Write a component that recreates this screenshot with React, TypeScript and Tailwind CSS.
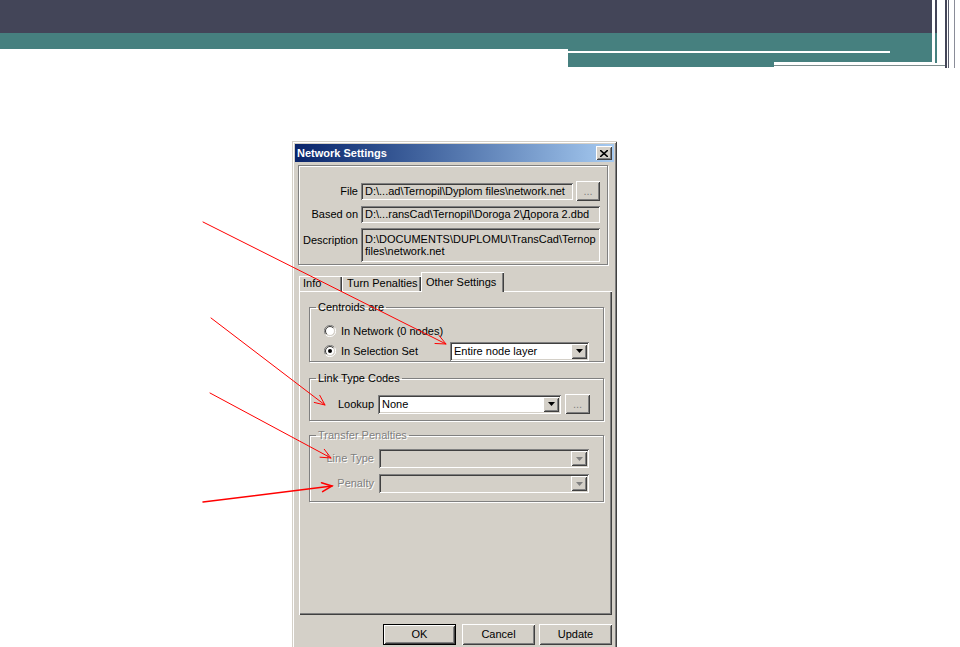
import React from 'react';

const sunken = 'shadow-[inset_1px_1px_0_#808080,inset_-1px_-1px_0_#ffffff,inset_2px_2px_0_#404040,inset_-2px_-2px_0_#d4d0c8]';
const raised = 'shadow-[inset_1px_1px_0_#ffffff,inset_-1px_-1px_0_#404040,inset_2px_2px_0_#d4d0c8,inset_-2px_-2px_0_#808080]';
const grey = 'text-[#808080] [text-shadow:1px_1px_0_#ffffff]';

const Header: React.FC = () => (
    <svg width="960" height="70" viewBox="0 0 960 70" className="block">
        <rect x="0" y="0" width="932" height="33" fill="#434558" />
        <rect x="0" y="33" width="932" height="16" fill="#46807f" />
        <rect x="568" y="49" width="364" height="13" fill="#46807f" />
        <rect x="568" y="62" width="206" height="5" fill="#46807f" />
        <rect x="568" y="51" width="322" height="2" fill="#ffffff" />
        <line x1="774" y1="65.5" x2="946" y2="65.5" stroke="#7d8c8c" strokeWidth="1" />
        <rect x="935" y="0" width="2" height="33" fill="#434558" />
        <rect x="935" y="33" width="2" height="30" fill="#46807f" />
        <rect x="945" y="0" width="2" height="68" fill="#434558" />
        <rect x="948" y="0" width="1" height="68" fill="#5a5c6c" />
        <rect x="954" y="0" width="1" height="68" fill="#8a8c98" />
    </svg>
);

const Arrow: React.FC<{ x1: number; y1: number; x2: number; y2: number; w?: number }> = ({ x1, y1, x2, y2, w = 1 }) => {
    const a = Math.atan2(y2 - y1, x2 - x1);
    const L = 11;
    const s = 0.42;
    const p1 = `${x2 - L * Math.cos(a - s)},${y2 - L * Math.sin(a - s)}`;
    const p2 = `${x2 - L * Math.cos(a + s)},${y2 - L * Math.sin(a + s)}`;
    return (
        <g stroke="#ff0000" strokeWidth={w} fill="none" strokeLinecap="round">
            <line x1={x1} y1={y1} x2={x2} y2={y2} />
            <polyline points={`${p1} ${x2},${y2} ${p2}`} />
        </g>
    );
};

const DropBtn: React.FC<{ disabled?: boolean }> = ({ disabled }) => (
    <span className={`w-[16px] h-[15px] bg-[#d4d0c8] flex items-center justify-center shrink-0 ${raised}`}>
        <svg width="7" height="4" viewBox="0 0 7 4">
            <polygon points="0,0 7,0 3.5,4" fill={disabled ? '#808080' : '#000000'} />
        </svg>
    </span>
);

const Combo: React.FC<{ value?: string; className: string; disabled?: boolean }> = ({ value, className, disabled }) => (
    <div className={`flex items-center p-[2px] ${disabled ? 'bg-[#d4d0c8]' : 'bg-white'} ${sunken} ${className}`}>
        <span className="flex-1 pl-[2px] whitespace-nowrap overflow-hidden">{value}</span>
        <DropBtn disabled={disabled} />
    </div>
);

const Radio: React.FC<{ checked?: boolean }> = ({ checked }) => (
    <svg width="12" height="12" viewBox="0 0 12 12" className="shrink-0">
        <path d="M10.5 2.5 A5.5 5.5 0 0 0 1.5 9.5" stroke="#808080" fill="none" />
        <path d="M1.5 9.5 A5.5 5.5 0 0 0 10.5 2.5" stroke="#ffffff" fill="none" />
        <circle cx="6" cy="6" r="4.5" fill="#ffffff" stroke="#d4d0c8" />
        <path d="M9.2 2.8 A4.5 4.5 0 0 0 2.8 9.2" stroke="#404040" fill="none" />
        {checked && <circle cx="6" cy="6" r="2" fill="#000000" />}
    </svg>
);

const Group: React.FC<{ title: string; disabled?: boolean; className?: string; children: React.ReactNode }> = ({ title, disabled, className, children }) => (
    <fieldset className={`border border-[#808080] shadow-[inset_1px_1px_0_#ffffff,1px_1px_0_#ffffff] ${className ?? ''}`}>
        <legend className={`ml-[6px] px-[2px] leading-[13px] ${disabled ? grey : ''}`}>{title}</legend>
        {children}
    </fieldset>
);

const WinButton: React.FC<{ label: string; isDefault?: boolean; className?: string }> = ({ label, isDefault, className }) => (
    <button className={`w-[73px] h-[21px] bg-[#d4d0c8] flex items-center justify-center ${isDefault ? 'border border-black' : ''} ${raised} ${className ?? ''}`}>
        {label}
    </button>
);

export default function App() {
    return (
        <div className="relative w-[960px] h-[647px] overflow-hidden bg-white font-['Liberation_Sans',Arial,sans-serif] text-[11px] leading-[13px] text-black">
            <Header />

            {/* Dialog */}
            <div className={`ml-[292px] mt-[71px] w-[325px] h-[520px] bg-[#d4d0c8] p-[3px] shadow-[inset_1px_1px_0_#d4d0c8,inset_-1px_-1px_0_#404040,inset_2px_2px_0_#ffffff,inset_-2px_-2px_0_#808080]`}>
                <div className="h-[18px] flex items-center justify-between pl-[2px] pr-[2px] bg-gradient-to-r from-[#0a246a] to-[#a6caf0]">
                    <span className="text-white font-bold text-[11px]">Network Settings</span>
                    <span className={`w-[16px] h-[14px] bg-[#d4d0c8] flex items-center justify-center ${raised}`}>
                        <svg width="8" height="7" viewBox="0 0 8 7">
                            <path d="M0 0 L8 7 M8 0 L0 7" stroke="#000" strokeWidth="1.6" />
                        </svg>
                    </span>
                </div>

                {/* File info panel */}
                <div className="ml-[3px] mt-[3px] w-[310px] h-[100px] border border-[#808080] shadow-[inset_1px_1px_0_#ffffff,1px_1px_0_#ffffff] pt-[15px]">
                    <div className="flex items-center h-[20px]">
                        <span className="w-[62px] text-right pr-[3px]">File</span>
                        <div className={`w-[212px] h-[17px] pl-[4px] flex items-center whitespace-nowrap overflow-hidden ${sunken}`}>D:\...ad\Ternopil\Dyplom files\network.net</div>
                        <span className={`ml-[3px] w-[24px] h-[20px] flex items-center justify-center text-[#808080] ${raised}`}>...</span>
                    </div>
                    <div className="flex items-center h-[17px] mt-[5px]">
                        <span className="w-[62px] text-right pr-[3px]">Based on</span>
                        <div className={`w-[239px] h-[17px] pl-[4px] flex items-center whitespace-nowrap overflow-hidden ${sunken}`}>D:\...ransCad\Ternopil\Doroga 2\Дорога 2.dbd</div>
                    </div>
                    <div className="flex items-start mt-[5px]">
                        <span className="w-[62px] text-right pr-[3px] pt-[6px]">Description</span>
                        <div className={`w-[239px] h-[34px] pl-[4px] pt-[5px] overflow-hidden leading-[12px] ${sunken}`}>
                            <div className="whitespace-nowrap">D:\DOCUMENTS\DUPLOMU\TransCad\Ternop</div>
                            <div className="whitespace-nowrap">files\network.net</div>
                        </div>
                    </div>
                </div>

                {/* Tabs */}
                <div className="ml-[4px] mt-[8px] flex items-end h-[18px]">
                    <span className="w-[43px] h-[15px] pl-[4px] flex items-center shadow-[inset_1px_1px_0_#ffffff,inset_-1px_0_0_#404040,inset_-2px_0_0_#808080]">Info</span>
                    <span className="w-[79px] h-[15px] pl-[5px] flex items-center shadow-[inset_1px_1px_0_#ffffff,inset_-1px_0_0_#404040,inset_-2px_0_0_#808080]">Turn Penalties</span>
                    <span className="relative z-10 -mb-[1px] w-[83px] h-[20px] pl-[5px] flex items-center bg-[#d4d0c8] shadow-[inset_1px_1px_0_#ffffff,inset_-1px_0_0_#404040,inset_-2px_0_0_#808080]">Other Settings</span>
                </div>

                {/* Tab panel */}
                <div className="ml-[4px] w-[313px] h-[324px] pl-[10px] pr-[8px] pt-[10px] shadow-[inset_1px_1px_0_#ffffff,inset_-1px_-1px_0_#404040,inset_-2px_-2px_0_#808080]">
                    <Group title="Centroids are" className="h-[61px]">
                        <div className="pt-[7px] pl-[14px]">
                            <div className="flex items-center h-[20px] gap-[5px]">
                                <Radio />
                                <span>In Network (0 nodes)</span>
                            </div>
                            <div className="flex items-center h-[20px]">
                                <Radio checked />
                                <span className="ml-[5px] w-[109px]">In Selection Set</span>
                                <Combo value="Entire node layer" className="w-[139px] h-[19px]" />
                            </div>
                        </div>
                    </Group>

                    <Group title="Link Type Codes" className="mt-[10px] h-[49px]">
                        <div className="pt-[9px] flex items-center h-[29px]">
                            <span className="w-[68px] text-right pr-[4px]">Lookup</span>
                            <Combo value="None" className="w-[183px] h-[19px]" />
                            <span className={`ml-[4px] w-[25px] h-[20px] flex items-center justify-center text-[#808080] ${raised}`}>...</span>
                        </div>
                    </Group>

                    <Group title="Transfer Penalties" disabled className="mt-[8px] h-[73px]">
                        <div className="pt-[7px]">
                            <div className="flex items-center h-[19px]">
                                <span className={`w-[69px] text-right pr-[5px] ${grey}`}>Line Type</span>
                                <Combo disabled className="w-[210px] h-[19px]" />
                            </div>
                            <div className="flex items-center h-[19px] mt-[6px]">
                                <span className={`w-[69px] text-right pr-[5px] ${grey}`}>Penalty</span>
                                <Combo disabled className="w-[210px] h-[19px]" />
                            </div>
                        </div>
                    </Group>
                </div>

                {/* Buttons */}
                <div className="flex justify-end mt-[9px] pr-[2px]">
                    <WinButton label="OK" isDefault />
                    <WinButton label="Cancel" className="ml-[6px]" />
                    <WinButton label="Update" className="ml-[4px]" />
                </div>
            </div>

            <svg className="absolute inset-0 pointer-events-none" width="960" height="647" viewBox="0 0 960 647">
                <Arrow x1={203} y1={222} x2={446} y2={344} />
                <Arrow x1={211} y1={318} x2={325} y2={405} />
                <Arrow x1={210} y1={393} x2={331} y2={458} />
                <Arrow x1={203} y1={502} x2={332} y2={486} w={1.5} />
            </svg>
        </div>
    );
}
